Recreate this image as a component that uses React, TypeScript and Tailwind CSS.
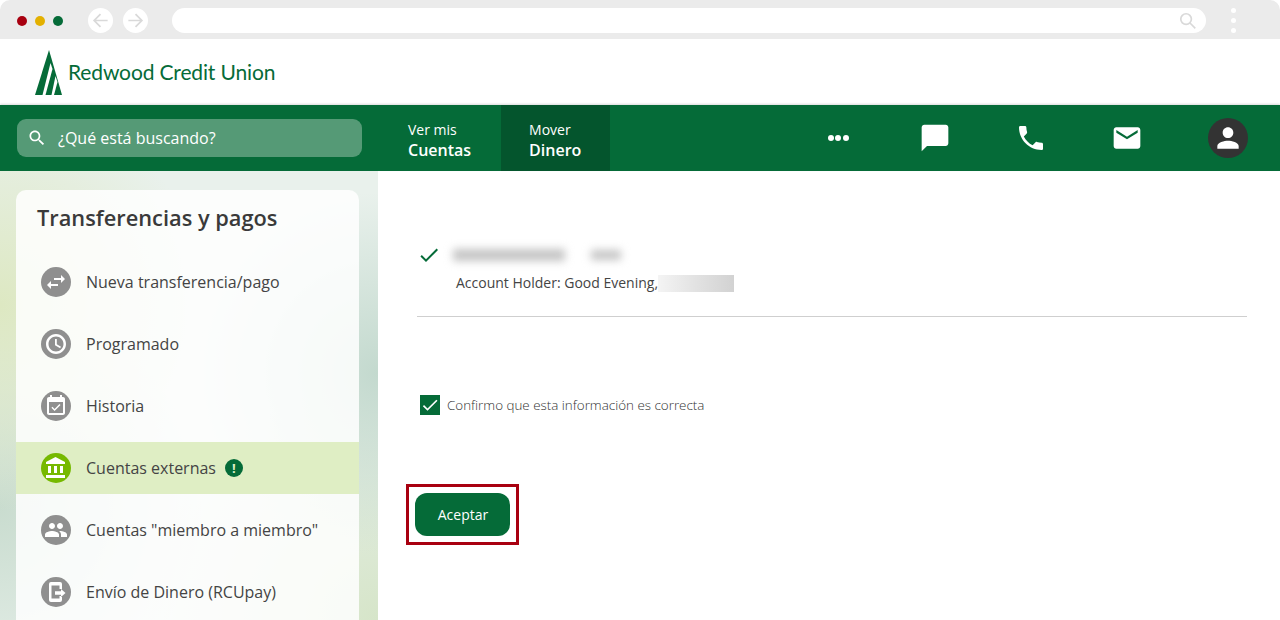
import type { ReactNode } from 'react';

const openSans = { fontFamily: '"Open Sans", sans-serif' };

function Mi({ d, className }: { d: string; className?: string }) {
  return (
    <svg viewBox="0 0 24 24" fill="currentColor" className={className}>
      <path d={d} />
    </svg>
  );
}

const ICONS = {
  search: 'M15.5 14h-.79l-.28-.27C15.41 12.59 16 11.11 16 9.5 16 5.91 13.09 3 9.5 3S3 5.91 3 9.5 5.91 16 9.5 16c1.61 0 3.09-.59 4.23-1.57l.27.28v.79l5 4.99L20.49 19l-4.99-5zm-6 0C7.01 14 5 11.99 5 9.5S7.01 5 9.5 5 14 7.01 14 9.5 11.99 14 9.5 14z',
  chat: 'M20 2H4c-1.1 0-2 .9-2 2v18l4-4h14c1.1 0 2-.9 2-2V4c0-1.1-.9-2-2-2z',
  phone: 'M6.62 10.79c1.44 2.83 3.76 5.14 6.59 6.59l2.2-2.2c.27-.27.67-.36 1.02-.24 1.12.37 2.33.57 3.57.57.55 0 1 .45 1 1V20c0 .55-.45 1-1 1-9.39 0-17-7.61-17-17 0-.55.45-1 1-1h3.5c.55 0 1 .45 1 1 0 1.25.2 2.45.57 3.57.11.35.03.74-.25 1.02l-2.2 2.2z',
  mail: 'M20 4H4c-1.1 0-1.99.9-1.99 2L2 18c0 1.1.9 2 2 2h16c1.1 0 2-.9 2-2V6c0-1.1-.9-2-2-2zm0 4l-8 5-8-5V6l8 5 8-5v2z',
  person: 'M12 12c2.21 0 4-1.79 4-4s-1.79-4-4-4-4 1.79-4 4 1.79 4 4 4zm0 2c-2.67 0-8 1.34-8 4v2h16v-2c0-2.66-5.33-4-8-4z',
  swap: 'M6.99 11L3 15l3.99 4v-3H14v-2H6.99v-3zM21 9l-3.99-4v3H10v2h7.01v3L21 9z',
  clock: 'M11.99 2C6.47 2 2 6.48 2 12s4.47 10 9.99 10C17.52 22 22 17.52 22 12S17.52 2 11.99 2zM12 19.500c-4.140 0-7.500-3.360-7.500-7.500S7.860 4.500 12 4.500s7.500 3.360 7.500 7.500-3.360 7.500-7.500 7.500zM12.800 7H11v6.200l5.100 3.050.9-1.450-4.200-2.500z',
  event: 'M16.53 11.06L15.47 10l-4.88 4.88-2.12-2.12-1.06 1.06L10.59 17l5.94-5.94zM19 3h-1V1h-2v2H8V1H6v2H5c-1.11 0-1.99.9-1.99 2L3 19c0 1.1.89 2 2 2h14c1.1 0 2-.9 2-2V5c0-1.1-.9-2-2-2zm0 16H5V8h14v11z',
  bank: 'M4 10v7h3v-7H4zm6 0v7h3v-7h-3zM2 22h19v-3H2v3zm14-12v7h3v-7h-3zm-4.5-9L2 6v2h19V6l-9.5-5z',
  people: 'M16 11c1.66 0 2.99-1.34 2.99-3S17.66 5 16 5c-1.66 0-3 1.34-3 3s1.34 3 3 3zm-8 0c1.66 0 2.99-1.34 2.99-3S9.66 5 8 5C6.34 5 5 6.34 5 8s1.34 3 3 3zm0 2c-2.33 0-7 1.17-7 3.5V19h14v-2.5c0-2.33-4.67-3.5-7-3.5zm8 0c-.29 0-.62.02-.97.05 1.16.84 1.97 1.97 1.97 3.45V19h6v-2.5c0-2.33-4.67-3.5-7-3.5z',
  send: 'M5 4a2 2 0 0 1 2-2h9a2 2 0 0 1 2 2v5h-2.500V5.500h-8v13h8V16H18v4a2 2 0 0 1-2 2H7a2 2 0 0 1-2-2V4zm12 5v2.200h-6v3.600h6V17l4.500-4z',
  check: 'M9 16.17L4.83 12l-1.42 1.41L9 19 21 7l-1.41-1.41z',
};

function NavIcon({ children }: { children: ReactNode }) {
  return <div className="flex w-[96px] items-center justify-center text-white">{children}</div>;
}

function SideRow({ icon, label, active, children }: { icon: string; label: string; active?: boolean; children?: ReactNode }) {
  return (
    <div className={`flex h-[52px] items-center pl-[25px] ${active ? 'bg-[#dfeec4]' : ''}`}>
      <div className={`flex h-[30px] w-[30px] items-center justify-center rounded-full text-white ${active ? 'bg-[#76b900]' : 'bg-[#8f8f8f]'}`}>
        <Mi d={icon} className="h-[24px] w-[24px]" />
      </div>
      <span className="ml-[15px] text-[16px] text-[#444]">{label}</span>
      {children}
    </div>
  );
}

export default function App() {
  return (
    <div className="h-[620px] w-[1280px] overflow-hidden bg-white" style={openSans}>
      {/* browser chrome */}
      <div className="flex h-[39px] items-center rounded-t-[10px] bg-[#ebebeb] pt-[2px] pl-[17px]">
        <div className="flex gap-[8px]">
          <span className="h-[10px] w-[10px] rounded-full bg-[#a80010]" />
          <span className="h-[10px] w-[10px] rounded-full bg-[#e3b000]" />
          <span className="h-[10px] w-[10px] rounded-full bg-[#056b38]" />
        </div>
        <div className="ml-[25px] flex gap-[10px]">
          <div className="flex h-[25px] w-[25px] items-center justify-center rounded-full bg-white text-[#d9d9d9]">
            <svg viewBox="0 0 24 24" fill="none" stroke="currentColor" strokeWidth="2.2" className="h-[19px] w-[19px]"><path d="M21 12H4M12 4l-8 8 8 8" /></svg>
          </div>
          <div className="flex h-[25px] w-[25px] items-center justify-center rounded-full bg-white text-[#d9d9d9]">
            <svg viewBox="0 0 24 24" fill="none" stroke="currentColor" strokeWidth="2.2" className="h-[19px] w-[19px]"><path d="M3 12h17M12 4l8 8-8 8" /></svg>
          </div>
        </div>
        <div className="ml-[24px] flex h-[25px] w-[1034px] items-center justify-end rounded-full bg-white pr-[10px] text-[#d9d9d9]">
          <svg viewBox="0 0 24 24" fill="none" stroke="currentColor" strokeWidth="2.4" className="h-[17px] w-[17px]"><circle cx="10" cy="10" r="7.500" /><path d="M15.500 15.500L23 23" /></svg>
        </div>
        <div className="ml-[25px] flex flex-col gap-[5px]">
          <span className="h-[5px] w-[5px] rounded-full bg-white" />
          <span className="h-[5px] w-[5px] rounded-full bg-white" />
          <span className="h-[5px] w-[5px] rounded-full bg-white" />
        </div>
      </div>

      {/* logo */}
      <div className="flex h-[66px] items-center pl-[35px]">
        <svg viewBox="0 0 27 45" className="h-[45px] w-[27px] text-[#056b38]" fill="currentColor">
          <path d="M14 0L0 45h27z" />
          <path d="M15.500 13L7.500 45h3L17.500 19z" fill="#fff" />
          <path d="M20.500 26L16.500 45h2.500L22.500 32z" fill="#fff" />
        </svg>
        <span className="mb-[2px] ml-[6px] text-[21px] leading-none tracking-[-0.14px] text-[#056b38]" style={{ fontFamily: 'Lato, sans-serif' }}>
          Redwood Credit Union
        </span>
      </div>

      {/* main nav */}
      <div className="flex h-[66px] items-stretch bg-[#056b38] text-white shadow-[0_-1px_2px_rgba(0,0,0,0.15)]">
        <div className="ml-[17px] flex h-[38px] w-[345px] items-center self-center rounded-[9px] bg-[#559a76] pl-[10px]">
          <Mi d={ICONS.search} className="h-[20px] w-[20px]" />
          <span className="ml-[11px] text-[16px]">¿Qué está buscando?</span>
        </div>
        <div className="ml-[18px] flex flex-col justify-center pt-[4px] pr-[30px] pl-[28px] leading-[20px]">
          <span className="text-[14px]">Ver mis</span>
          <span className="text-[16px] font-semibold">Cuentas</span>
        </div>
        <div className="flex w-[109px] flex-col justify-center bg-[#04552d] pt-[4px] pl-[28px] leading-[20px]">
          <span className="text-[14px]">Mover</span>
          <span className="text-[16px] font-semibold">Dinero</span>
        </div>
        <div className="ml-[181px] flex">
          <NavIcon>
            <div className="mr-[2px] flex gap-[1.500px]">
              <span className="h-[6px] w-[6px] rounded-full bg-white" />
              <span className="h-[6px] w-[6px] rounded-full bg-white" />
              <span className="h-[6px] w-[6px] rounded-full bg-white" />
            </div>
          </NavIcon>
          <NavIcon><Mi d={ICONS.chat} className="h-[32px] w-[32px]" /></NavIcon>
          <NavIcon><Mi d={ICONS.phone} className="h-[32px] w-[32px]" /></NavIcon>
          <NavIcon><Mi d={ICONS.mail} className="h-[32px] w-[32px]" /></NavIcon>
        </div>
        <div className="ml-[33px] flex h-[40px] w-[40px] items-center justify-center self-center rounded-full bg-[#333] text-white">
          <Mi d={ICONS.person} className="h-[32px] w-[32px]" />
        </div>
      </div>

      <div className="flex h-[449px]">
        {/* sidebar */}
        <div className="w-[378px] bg-[radial-gradient(circle_at_0%_30%,#dde8c2_0,transparent_42%),radial-gradient(circle_at_0%_75%,#c9dccf_0,transparent_40%),radial-gradient(circle_at_100%_45%,#c3d9ce_0,transparent_40%),radial-gradient(circle_at_100%_100%,#d6e5c9_0,transparent_40%),linear-gradient(#e9f1ec,#e9f1ec)] pt-[19px] pr-[19px] pl-[16px]">
          <div className="h-[500px] rounded-t-[10px] bg-white/85 pt-[15px]">
            <h2 className="pl-[21px] text-[21.8px] font-semibold leading-[26px] text-[#3a3a3a]">Transferencias y pagos</h2>
            <div className="mt-[25px] flex flex-col gap-[10px]">
              <SideRow icon={ICONS.swap} label="Nueva transferencia/pago" />
              <SideRow icon={ICONS.clock} label="Programado" />
              <SideRow icon={ICONS.event} label="Historia" />
              <SideRow icon={ICONS.bank} label="Cuentas externas" active>
                <span className="ml-[9px] flex h-[18px] w-[18px] items-center justify-center rounded-full bg-[#056b38] text-[13px] font-bold leading-none text-[#dfeec4]">!</span>
              </SideRow>
              <SideRow icon={ICONS.people} label={'Cuentas "miembro a miembro"'} />
              <SideRow icon={ICONS.send} label="Envío de Dinero (RCUpay)" />
            </div>
          </div>
        </div>

        {/* confirmation */}
        <div className="flex-1 pr-[33px] pl-[39px]">
          <div className="border-b border-[#cfcfcf] pt-[72px] pb-[23px]">
            <div className="flex items-center">
              <Mi d={ICONS.check} className="h-[24px] w-[24px] text-[#056b38]" />
              <div className="ml-[12px] h-[12px] w-[112px] bg-[#c4c4c4] blur-[4px]" />
              <div className="ml-[26px] h-[10px] w-[30px] bg-[#c4c4c4] blur-[4px]" />
            </div>
            <div className="mt-[6px] flex items-center pl-[39px]">
              <span className="text-[14px] leading-[20px] text-[#444]">Account Holder: Good Evening,</span>
              <div className="h-[17px] w-[76px] bg-[linear-gradient(90deg,#f4f4f4,#e2e2e2_50%,#d2d2d2_100%)] blur-[0.5px]" />
            </div>
          </div>

          <label className="mt-[78px] flex items-center pl-[3px]">
            <span className="flex h-[20px] w-[20px] items-center justify-center bg-[#056b38] text-white">
              <Mi d={ICONS.check} className="h-[20px] w-[20px]" />
            </span>
            <span className="ml-[7px] text-[13.4px] font-light text-[#333]">Confirmo que esta información es correcta</span>
          </label>

          <div className="mt-[69px] ml-[-11px] w-[113px] border-[3px] border-[#a80010] p-[6px]">
            <button className="h-[43px] w-[95px] rounded-[12px] bg-[#056b38] pb-[1px] pl-[1px] text-[14px] text-white">Aceptar</button>
          </div>
        </div>
      </div>
    </div>
  );
}
